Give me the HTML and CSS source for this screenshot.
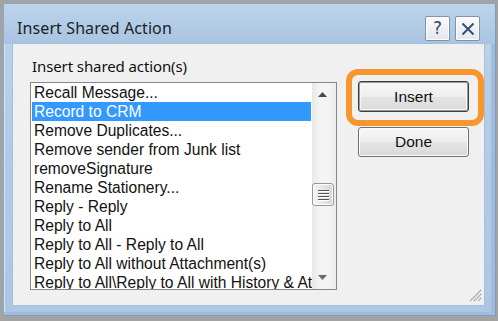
FILE: index.html
```html
<!DOCTYPE html>
<html>
<head>
<meta charset="utf-8">
<link rel="stylesheet" href="styles.css">
</head>
<body>
<div class="window">
  <div class="titlebar">
    <span class="title">Insert Shared Action</span>
    <div class="tb-buttons">
      <div class="tb-btn help">?</div>
      <div class="tb-btn close">
        <svg width="14" height="14" viewBox="0 0 14 14"><path d="M1.5 1.5 L12.5 12.5 M12.5 1.5 L1.5 12.5" stroke="#3b5070" stroke-width="2" fill="none"/></svg>
      </div>
    </div>
  </div>
  <div class="content">
    <div class="left">
      <div class="label">Insert shared action(s)</div>
      <div class="listbox">
        <ul class="items">
          <li>Recall Message...</li>
          <li class="selected">Record to CRM</li>
          <li>Remove Duplicates...</li>
          <li>Remove sender from Junk list</li>
          <li>removeSignature</li>
          <li>Rename Stationery...</li>
          <li>Reply - Reply</li>
          <li>Reply to All</li>
          <li>Reply to All - Reply to All</li>
          <li>Reply to All without Attachment(s)</li>
          <li>Reply to All\Reply to All with History &amp; Attachments</li>
        </ul>
        <div class="scrollbar">
          <div class="arrow up"><svg width="9" height="5" viewBox="0 0 9 5"><path d="M4.5 0 L9 5 L0 5 Z" fill="#4a4a4a"/></svg></div>
          <div class="track">
            <div class="thumb"><span></span><span></span><span></span><span></span></div>
          </div>
          <div class="arrow down"><svg width="9" height="5" viewBox="0 0 9 5"><path d="M0 0 L9 0 L4.5 5 Z" fill="#6a6a6a"/></svg></div>
        </div>
      </div>
    </div>
    <div class="right">
      <div class="insert-wrap">
        <div class="btn default">Insert</div>
        <span class="highlight"></span>
      </div>
      <div class="btn">Done</div>
    </div>
    <svg class="grip" width="13" height="13" viewBox="0 0 13 13">
      <path d="M12 1 L1 12 M12 5 L5 12 M12 9 L9 12" stroke="#9a9a9a" stroke-width="1.5" stroke-dasharray="1.4 0.7" fill="none"/>
    </svg>
  </div>
</div>
</body>
</html>
```

FILE: styles.css
```css
html, body {
  margin: 0;
  padding: 0;
  background: #a3a3a3;
}

.window {
  margin: 3px 0 0 3px;
  width: 493px;
  height: 313px;
  box-sizing: border-box;
  border: 1px solid #8ea8c6;
  border-right-color: #7f9cc0;
  border-bottom-color: #7f9cc0;
  background: linear-gradient(#bcd4ec, #b3cbe6 40%, #adc7e3);
  box-shadow: inset -4px -3px 0 #a0bcdc, inset 1px 1px 0 #d3e3f3;
  display: flex;
  flex-direction: column;
}

.titlebar {
  height: 40px;
  flex: none;
  display: flex;
  justify-content: space-between;
  background: linear-gradient(#bcd4ec, #a9c4e1);
  padding: 0 15px 0 13px;
}

.title {
  font-family: "Noto Sans", "Open Sans", sans-serif;
  font-size: 16px;
  color: #1b1f26;
  line-height: 20px;
  padding-top: 14px;
  letter-spacing: 0.1px;
}

.tb-buttons {
  display: flex;
  gap: 5px;
  padding-top: 12px;
}

.tb-btn {
  width: 25px;
  height: 25px;
  box-sizing: border-box;
  border: 1px solid #7d92ad;
  border-radius: 2px;
  background: linear-gradient(#fafbfc, #e3e7ec);
  box-shadow: inset 0 0 0 1px #ffffff;
  display: flex;
  align-items: center;
  justify-content: center;
}

.help {
  font-family: "DejaVu Sans", sans-serif;
  font-size: 17px;
  color: #34486a;
  line-height: 1;
}

.content {
  flex: 1;
  margin: 0 11px 10px 9px;
  background: #f0f0f0;
  box-shadow: 0 0 0 1px #a6bfdb;
  position: relative;
  display: flex;
  gap: 21px;
  padding: 14px 0 0 17px;
}

.left {
  display: flex;
  flex-direction: column;
  gap: 7px;
}

.label {
  font-family: "Noto Sans", "Open Sans", sans-serif;
  font-size: 15px;
  line-height: 17px;
  letter-spacing: -0.1px;
  color: #111;
  padding-left: 2px;
}

.listbox {
  width: 307px;
  height: 208px;
  box-sizing: border-box;
  border: 1px solid #828790;
  background: #ffffff;
  display: flex;
}

.items {
  list-style: none;
  margin: 0;
  padding: 0;
  flex: 1;
  min-width: 0;
  overflow: hidden;
}

.items li {
  font-family: "Liberation Sans", Arial, sans-serif;
  font-size: 15.6px;
  line-height: 19px;
  height: 19px;
  color: #121212;
  white-space: nowrap;
  overflow: hidden;
  padding-left: 3px;
}

.items li.selected {
  background: #3399ff;
  color: #ffffff;
  margin-left: 1px;
  margin-right: 1px;
  padding-left: 2px;
}

.scrollbar {
  width: 24px;
  flex: none;
  display: flex;
  flex-direction: column;
  background: linear-gradient(90deg, #e8e8e8, #f4f4f4 30%, #f4f4f4 70%, #ececec);
}

.arrow {
  height: 23px;
  flex: none;
  display: flex;
  align-items: center;
  justify-content: center;
  padding-right: 3px;
}

.track {
  flex: 1;
  position: relative;
  padding-top: 77px;
}

.thumb {
  width: 22px;
  height: 23px;
  box-sizing: border-box;
  border: 1px solid #979797;
  border-radius: 3px;
  background: linear-gradient(90deg, #f4f4f4, #e6e6e6 50%, #d6d6d6);
  box-shadow: inset 0 0 0 1px #ffffff;
  display: flex;
  flex-direction: column;
  align-items: center;
  justify-content: center;
  gap: 2px;
}

.thumb span {
  display: block;
  width: 11px;
  height: 1px;
  background: #555;
  box-shadow: 0 1px 0 #fff;
}

.right {
  display: flex;
  flex-direction: column;
  gap: 15px;
  padding-top: 23px;
}

.insert-wrap {
  position: relative;
}

.btn {
  width: 111px;
  height: 30px;
  box-sizing: border-box;
  border: 1px solid #707070;
  border-radius: 3px;
  background: linear-gradient(#f7f7f7, #eeeeee 50%, #e4e4e4 51%, #dadada);
  box-shadow: inset 0 0 0 1px #fcfcfc;
  font-family: "Liberation Sans", Arial, sans-serif;
  font-size: 15.5px;
  color: #111;
  display: flex;
  align-items: center;
  justify-content: center;
}

.btn.default {
  height: 31px;
  border: 1px solid #3c3c3c;
  box-shadow: inset 0 0 0 1px #9a9a9a, inset 0 0 0 2px #f5f5f5;
}

.highlight {
  position: absolute;
  left: -12px;
  top: -12px;
  width: 138px;
  height: 57px;
  box-sizing: border-box;
  border: 6px solid #f7962e;
  border-radius: 12px;
  pointer-events: none;
}

.grip {
  position: absolute;
  right: 2px;
  bottom: 3px;
}
```
